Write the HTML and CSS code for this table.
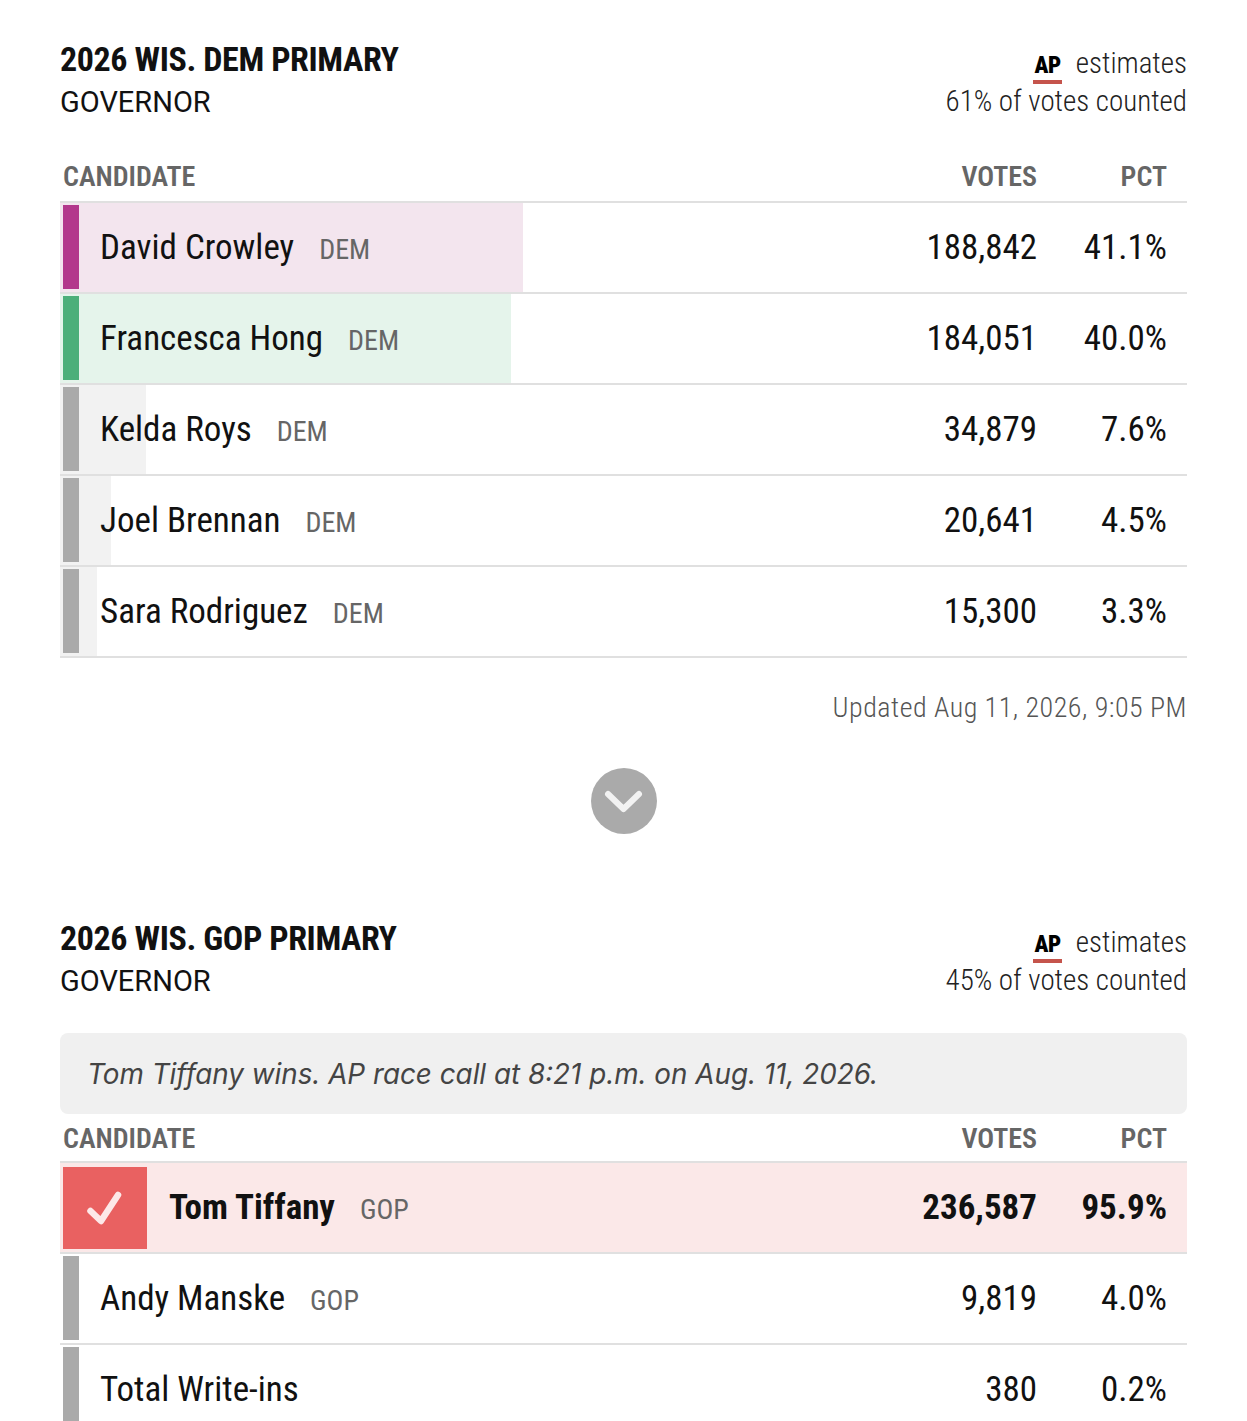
FILE: index.html
```html
<!DOCTYPE html>
<html lang="en">
<head>
<meta charset="utf-8">
<title>Wisconsin Governor Primary Results</title>
<link rel="stylesheet" href="styles.css">
</head>
<body>
<main class="page">
  <section class="race">
    <header class="race-head">
      <div class="race-titles">
        <h2 class="race-title">2026 WIS. DEM PRIMARY</h2>
        <div class="race-office">GOVERNOR</div>
      </div>
      <div class="race-meta">
        <div class="meta-source"><span class="ap-logo">AP</span><span class="meta-est">estimates</span></div>
        <div class="meta-count">61% of votes counted</div>
      </div>
    </header>
    <div class="results">
      <div class="results-head">
        <span class="col-cand">CANDIDATE</span><span class="col-num">VOTES</span><span class="col-num">PCT</span>
      </div>
      <div class="row row--magenta">
        <span class="fill" style="width:41.1%"></span>
        <span class="swatch"></span>
        <span class="cand"><span class="name">David Crowley</span><span class="party">DEM</span></span>
        <span class="num">188,842</span>
        <span class="num">41.1%</span>
      </div>
      <div class="row row--green">
        <span class="fill" style="width:40.0%"></span>
        <span class="swatch"></span>
        <span class="cand"><span class="name">Francesca Hong</span><span class="party">DEM</span></span>
        <span class="num">184,051</span>
        <span class="num">40.0%</span>
      </div>
      <div class="row">
        <span class="fill" style="width:7.6%"></span>
        <span class="swatch"></span>
        <span class="cand"><span class="name">Kelda Roys</span><span class="party">DEM</span></span>
        <span class="num">34,879</span>
        <span class="num">7.6%</span>
      </div>
      <div class="row">
        <span class="fill" style="width:4.5%"></span>
        <span class="swatch"></span>
        <span class="cand"><span class="name">Joel Brennan</span><span class="party">DEM</span></span>
        <span class="num">20,641</span>
        <span class="num">4.5%</span>
      </div>
      <div class="row">
        <span class="fill" style="width:3.3%"></span>
        <span class="swatch"></span>
        <span class="cand"><span class="name">Sara Rodriguez</span><span class="party">DEM</span></span>
        <span class="num">15,300</span>
        <span class="num">3.3%</span>
      </div>
    </div>
    <p class="updated">Updated Aug 11, 2026, 9:05 PM</p>
    <div class="expand-wrap">
      <button class="expand" type="button" aria-label="Show more">
        <svg width="66" height="66" viewBox="0 0 66 66" aria-hidden="true"><path d="M17 26 L32.5 41 L48 26" fill="none" stroke="#f2f2f2" stroke-width="6" stroke-linecap="round" stroke-linejoin="round"/></svg>
      </button>
    </div>
  </section>

  <section class="race race--second">
    <header class="race-head">
      <div class="race-titles">
        <h2 class="race-title">2026 WIS. GOP PRIMARY</h2>
        <div class="race-office">GOVERNOR</div>
      </div>
      <div class="race-meta">
        <div class="meta-source"><span class="ap-logo">AP</span><span class="meta-est">estimates</span></div>
        <div class="meta-count">45% of votes counted</div>
      </div>
    </header>
    <div class="race-call">Tom Tiffany wins. AP race call at 8:21 p.m. on Aug. 11, 2026.</div>
    <div class="results">
      <div class="results-head results-head--tight">
        <span class="col-cand">CANDIDATE</span><span class="col-num">VOTES</span><span class="col-num">PCT</span>
      </div>
      <div class="row row--winner">
        <span class="fill" style="width:100%"></span>
        <span class="checkbox">
          <svg width="84" height="82" viewBox="0 0 84 82" aria-hidden="true"><path d="M27.5 44 L38 54 L55 28" fill="none" stroke="#fde9e9" stroke-width="6.5" stroke-linecap="round" stroke-linejoin="round"/></svg>
        </span>
        <span class="cand"><span class="name">Tom Tiffany</span><span class="party">GOP</span></span>
        <span class="num">236,587</span>
        <span class="num">95.9%</span>
      </div>
      <div class="row">
        <span class="fill" style="width:0%"></span>
        <span class="swatch"></span>
        <span class="cand"><span class="name">Andy Manske</span><span class="party">GOP</span></span>
        <span class="num">9,819</span>
        <span class="num">4.0%</span>
      </div>
      <div class="row">
        <span class="fill" style="width:0%"></span>
        <span class="swatch"></span>
        <span class="cand"><span class="name">Total Write-ins</span></span>
        <span class="num">380</span>
        <span class="num">0.2%</span>
      </div>
    </div>
  </section>
</main>
</body>
</html>
```

FILE: styles.css
```css
html, body {
  margin: 0;
  padding: 0;
  background: #ffffff;
}

body {
  font-family: "Roboto Condensed", Roboto, "Liberation Sans", sans-serif;
  font-stretch: 75%;
  color: #111111;
}

.page {
  padding: 39px 60px 0 60px;
}

/* ---------- race header ---------- */
.race-head {
  display: flex;
  justify-content: space-between;
  align-items: flex-start;
}

.race-title {
  margin: 0;
  font-size: 34px;
  line-height: 40px;
  font-weight: 700;
  letter-spacing: -0.4px;
  color: #111111;
}

.race-office {
  margin-top: 5px;
  font-family: Roboto, "Liberation Sans", sans-serif;
  font-stretch: 95%;
  font-size: 29px;
  line-height: 36px;
  font-weight: 400;
  color: #111111;
}

.race-meta {
  margin-top: 7px;
  text-align: right;
  font-size: 29px;
  line-height: 34px;
  font-weight: 300;
  color: #222222;
}

.meta-source {
  display: flex;
  justify-content: flex-end;
  align-items: baseline;
  gap: 14px;
}

.ap-logo {
  display: inline-block;
  font-family: Roboto, "Liberation Sans", sans-serif;
  font-stretch: 85%;
  font-weight: 900;
  font-size: 23px;
  line-height: 22px;
  letter-spacing: -0.5px;
  color: #000000;
  padding: 0 1px 3px 2px;
  border-bottom: 4px solid #c5544c;
}

/* ---------- results table ---------- */
.results {
  margin-top: 40px;
}

.results-head {
  display: grid;
  grid-template-columns: 1fr 160px 130px;
  padding: 0 20px 7px 3px;
  border-bottom: 2px solid #e0e0e0;
  font-size: 28px;
  line-height: 34px;
  font-weight: 600;
  color: #666666;
}

.results-head--tight {
  padding-bottom: 5px;
}

.col-num {
  text-align: right;
}

.row {
  position: relative;
  display: grid;
  grid-template-columns: 16px 1fr 160px 130px;
  align-items: center;
  height: 89px;
  padding: 0 20px 0 3px;
  border-bottom: 2px solid #e0e0e0;
  font-size: 35px;
  font-weight: 400;
}

.fill {
  position: absolute;
  left: 0;
  top: 0;
  bottom: 0;
  background: #f2f2f2;
}

.swatch {
  position: relative;
  align-self: stretch;
  margin: 2px 0 3px 0;
  background: #aaaaaa;
}

.cand {
  position: relative;
  display: flex;
  align-items: baseline;
  gap: 25px;
  padding-left: 21px;
}

.name {
  color: #111111;
}

.party {
  font-family: Roboto, "Liberation Sans", sans-serif;
  font-stretch: 85%;
  font-size: 28px;
  color: #666666;
}

.num {
  position: relative;
  text-align: right;
  color: #111111;
}

.row--magenta .fill { background: #f3e5ee; }
.row--magenta .swatch { background: #b3388c; }

.row--green .fill { background: #e5f4eb; }
.row--green .swatch { background: #4caf7a; }

.row--winner {
  grid-template-columns: 84px 1fr 160px 130px;
}

.row--winner .fill { background: #fbe8e8; }

.checkbox {
  position: relative;
  align-self: stretch;
  margin: 4px 0 3px 0;
  display: flex;
  align-items: center;
  justify-content: center;
  background: #e96161;
}

.row--winner .cand { padding-left: 22px; }
.row--winner .name,
.row--winner .num { font-weight: 700; }

/* ---------- footer of race ---------- */
.updated {
  margin: 33px 0 0 0;
  text-align: right;
  font-size: 28px;
  line-height: 34px;
  font-weight: 300;
  letter-spacing: 0.5px;
  color: #555555;
}

.expand-wrap {
  display: flex;
  justify-content: center;
  margin-top: 43px;
}

.expand {
  width: 66px;
  height: 66px;
  padding: 0;
  border: none;
  border-radius: 50%;
  background: #aaaaaa;
  display: flex;
  align-items: center;
  justify-content: center;
  cursor: pointer;
}

.race--second {
  margin-top: 84px;
}

.race-call {
  margin-top: 34px;
  height: 81px;
  display: flex;
  align-items: center;
  padding: 0 27px;
  background: #f0f0f0;
  border-radius: 8px;
  font-family: Inter, Roboto, sans-serif;
  font-stretch: normal;
  font-style: italic;
  font-size: 27.8px;
  color: #444444;
}

.race-call + .results {
  margin-top: 8px;
}
```
